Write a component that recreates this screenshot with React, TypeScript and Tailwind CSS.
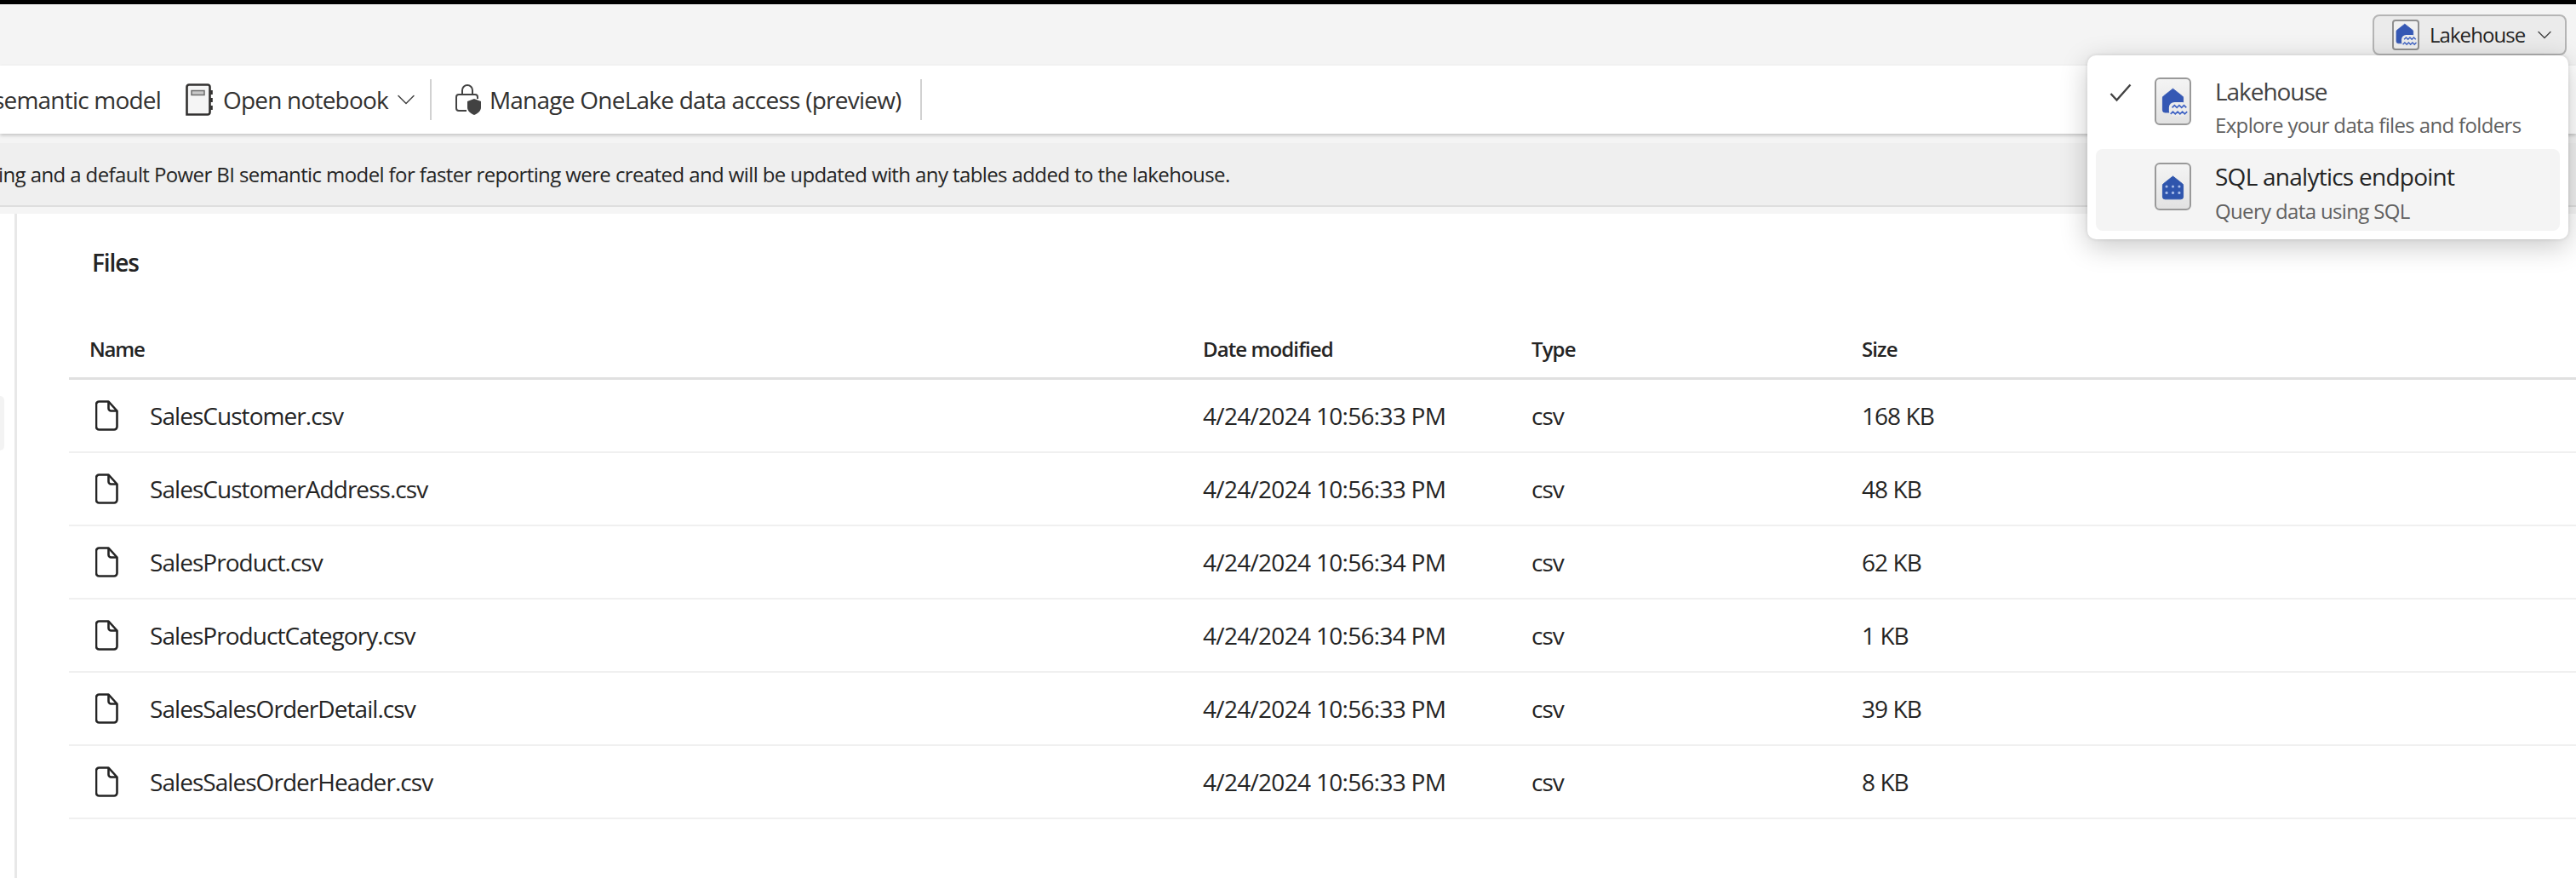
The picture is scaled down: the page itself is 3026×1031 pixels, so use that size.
import { ChevronDown } from 'lucide-react';

const files = [
  { name: 'SalesCustomer.csv', modified: '4/24/2024 10:56:33 PM', size: '168 KB' },
  { name: 'SalesCustomerAddress.csv', modified: '4/24/2024 10:56:33 PM', size: '48 KB' },
  { name: 'SalesProduct.csv', modified: '4/24/2024 10:56:34 PM', size: '62 KB' },
  { name: 'SalesProductCategory.csv', modified: '4/24/2024 10:56:34 PM', size: '1 KB' },
  { name: 'SalesSalesOrderDetail.csv', modified: '4/24/2024 10:56:33 PM', size: '39 KB' },
  { name: 'SalesSalesOrderHeader.csv', modified: '4/24/2024 10:56:33 PM', size: '8 KB' },
];

function FileIcon() {
  return (
    <svg className="w-[27px] h-[36px] shrink-0" viewBox="0 0 27 36" fill="none" stroke="#242424" strokeWidth={2.6} strokeLinejoin="round">
      <path d="M4.5 1.5h11l10 11v18.500a3.500 3.500 0 0 1-3.500 3.500h-17.500a3.500 3.500 0 0 1-3.500-3.500v-26a3.500 3.500 0 0 1 3.500-3.500z" />
      <path d="M15.5 1.5v8a3 3 0 0 0 3 3h7" />
    </svg>
  );
}

function HouseShape({ kind }: { kind: 'lake' | 'sql' }) {
  if (kind === 'sql') {
    return (
      <>
        <path d="M21 15l12 9.500a2 2 0 0 1 1 2v14.500a3 3 0 0 1-3 3h-20a3 3 0 0 1-3-3v-14.500a2 2 0 0 1 1-2z" fill="#2f55ad" stroke="#2f55ad" strokeLinejoin="round" />
        {[13, 21, 29].map((cx) => (
          <g key={cx} fill="#a9bde9">
            <circle cx={cx} cy={28} r={1.7} />
            <circle cx={cx} cy={36} r={1.7} />
          </g>
        ))}
      </>
    );
  }
  return (
    <>
      <path d="M21 12l12 9.500a2 2 0 0 1 1 2v15.500a3 3 0 0 1-3 3h-20a3 3 0 0 1-3-3v-15.500a2 2 0 0 1 1-2z" fill="#3558b4" stroke="#3558b4" strokeLinejoin="round" />
      <rect x="16" y="29" width="24" height="18" rx="7" fill="#ececec" />
      <g fill="none" stroke="#3f63c4" strokeWidth={1.8}>
        <path d="M20 36l3-3 3 3 3-3 3 3 3-3 3 3" />
        <path d="M18 44l3-3 3 3 3-3 3 3 3-3 3 3 3-3" />
      </g>
    </>
  );
}

function TileIcon({ kind }: { kind: 'lake' | 'sql' }) {
  return (
    <div className="w-[43px] h-[56px] shrink-0 rounded-[6px] border-[2px] border-[#999999] bg-gradient-to-b from-[#f4f4f4] to-[#e2e2e2] flex items-center justify-center">
      <svg className="w-[39px] h-[52px]" viewBox="0 0 42 56">
        <HouseShape kind={kind} />
      </svg>
    </div>
  );
}

export default function App() {
  return (
    <div className="relative w-[3026px] h-[1031px] overflow-hidden bg-white text-[#242424] font-['Open_Sans','Liberation_Sans',sans-serif]">
      <div className="h-[5px] bg-black" />

      {/* Top bar with view switcher */}
      <div className="h-[72px] bg-[#f4f4f4] flex justify-end pr-[11px] pt-[12px]">
        <button className="w-[228px] h-[48px] rounded-[8px] border-[2px] border-[#b5b5b5] bg-[#ebebeb] flex items-center pl-[21px] gap-[12px]">
          <div className="w-[32px] h-[36px] shrink-0 rounded-[4px] border-[2px] border-[#8f8f8f] bg-[#f0f0f0] flex items-center justify-center overflow-hidden">
            <svg className="w-[28px] h-[32px]" viewBox="4 9 37 40">
              <HouseShape kind="lake" />
            </svg>
          </div>
          <span className="text-[24px] leading-none tracking-[-0.95px] text-[#242424]">Lakehouse</span>
          <ChevronDown className="w-[28px] h-[28px] -ml-[3px] text-[#424242] shrink-0" strokeWidth={1.2} />
        </button>
      </div>

      {/* Command bar */}
      <div className="h-[80px] bg-white flex items-center shadow-[0_2px_4px_rgba(0,0,0,0.2)] relative text-[28px] text-[#323130] tracking-[-0.8px] whitespace-nowrap">
        <span className="ml-[-8px]">semantic model</span>
        <svg className="w-[32px] h-[38px] ml-[29px] shrink-0" viewBox="0 0 32 38" fill="none">
          <path d="M4 1.5h22a2.500 2.500 0 0 1 2.500 2.500v30a2.500 2.500 0 0 1-2.500 2.500h-24.500v-32.500a2.500 2.500 0 0 1 2.500-2.500z" fill="#f5f5f5" stroke="#323130" strokeWidth={2.6} />
          <rect x="7" y="8.5" width="15" height="5" fill="#c8c8c8" stroke="#6e6e6e" strokeWidth={1.5} />
          <path d="M30.5 8v5M30.5 17v5M30.5 26v5" stroke="#323130" strokeWidth={2.6} />
        </svg>
        <span className="ml-[12px]">Open notebook</span>
        <ChevronDown className="w-[36px] h-[36px] ml-[3px] text-[#424242] shrink-0" strokeWidth={1} />
        <div className="w-[2px] h-[48px] bg-[#d1d1d1] ml-[10px]" />
        <svg className="w-[32px] h-[36px] ml-[27px] shrink-0" viewBox="0 0 32 36" fill="none">
          <path d="M9 12v-5a6 6 0 0 1 12 0v5" stroke="#424242" strokeWidth={2} />
          <path d="M14 31h-9a3 3 0 0 1-3-3v-13a3 3 0 0 1 3-3h19a3 3 0 0 1 3 3v2" stroke="#424242" strokeWidth={2} />
          <path d="M23 17l8 3v7c0 4-3 7-8 9c-5-2-8-5-8-9v-7z" fill="#424242" />
        </svg>
        <span className="ml-[9px] tracking-[-0.76px]">Manage OneLake data access (preview)</span>
        <div className="w-[2px] h-[48px] bg-[#d1d1d1] ml-[22px]" />
      </div>

      {/* Info message */}
      <div className="h-[11px] bg-[#f4f4f4]" />
      <div className="h-[73px] bg-[#efefef] flex items-center text-[24px] tracking-[-0.6px] whitespace-nowrap">
        <span className="ml-[-2px]">ing and a default Power BI semantic model for faster reporting were created and will be updated with any tables added to the lakehouse.</span>
      </div>
      <div className="h-[2px] bg-[#dedede]" />
      <div className="h-[8px] bg-[#f5f5f5]" />

      {/* Main area */}
      <div className="flex h-[780px]">
        <div className="w-[20px] shrink-0 border-r-[3px] border-[#e8e8e8] pt-[214px]">
          <div className="w-[5px] h-[64px] bg-[#f3f3f3] rounded-r-[6px]" />
        </div>
        <div className="flex-1 pl-[61px]">
          <h2 className="text-[28px] leading-[36px] font-semibold tracking-[-1.1px] mt-[39px] ml-[27px]">Files</h2>

          <div className="mt-[68px] h-[52px] flex items-start text-[24px] leading-[32px] font-semibold tracking-[-0.9px] border-b-[3px] border-[#e0e0e0]">
            <span className="w-[1332px] pl-[24px] tracking-[-1.2px]">Name</span>
            <span className="w-[386px]">Date modified</span>
            <span className="w-[388px]">Type</span>
            <span>Size</span>
          </div>

          {files.map((file) => (
            <div key={file.name} className="h-[86px] flex items-center text-[28px] tracking-[-0.95px] border-b-[2px] border-[#f0f0f0]">
              <div className="w-[1332px] flex items-center pl-[31px]">
                <FileIcon />
                <span className="ml-[37px]">{file.name}</span>
              </div>
              <span className="w-[386px] tracking-[-0.7px]">{file.modified}</span>
              <span className="w-[388px]">csv</span>
              <span>{file.size}</span>
            </div>
          ))}
        </div>
      </div>

      {/* View switcher menu */}
      <div className="absolute left-[2452px] top-[65px] w-[565px] h-[216px] bg-white rounded-[10px] shadow-[0_8px_32px_rgba(0,0,0,0.22),0_0_4px_rgba(0,0,0,0.12)] px-[10px] pt-[14px]">
        <div className="h-[96px] flex items-start">
          <svg className="w-[26px] h-[22px] ml-[16px] mt-[19px] shrink-0" viewBox="0 0 26 22" fill="none" stroke="#424242" strokeWidth={2.4}>
            <path d="M1.5 12l7 7.500l16-18" />
          </svg>
          <div className="ml-[27px] mt-[12px]">
            <TileIcon kind="lake" />
          </div>
          <div className="ml-[28px] mt-[8px]">
            <div className="text-[28px] leading-[40px] tracking-[-1.05px] text-[#424242]">Lakehouse</div>
            <div className="text-[24px] leading-[40px] tracking-[-0.65px] text-[#616161]">Explore your data files and folders</div>
          </div>
        </div>
        <div className="h-[96px] flex items-start bg-[#f4f4f4] rounded-[8px]">
          <div className="ml-[69px] mt-[16px]">
            <TileIcon kind="sql" />
          </div>
          <div className="ml-[28px] mt-[12px]">
            <div className="text-[28px] leading-[40px] tracking-[-0.75px] text-[#242424]">SQL analytics endpoint</div>
            <div className="text-[24px] leading-[41px] tracking-[-0.65px] text-[#616161]">Query data using SQL</div>
          </div>
        </div>
      </div>
    </div>
  );
}
